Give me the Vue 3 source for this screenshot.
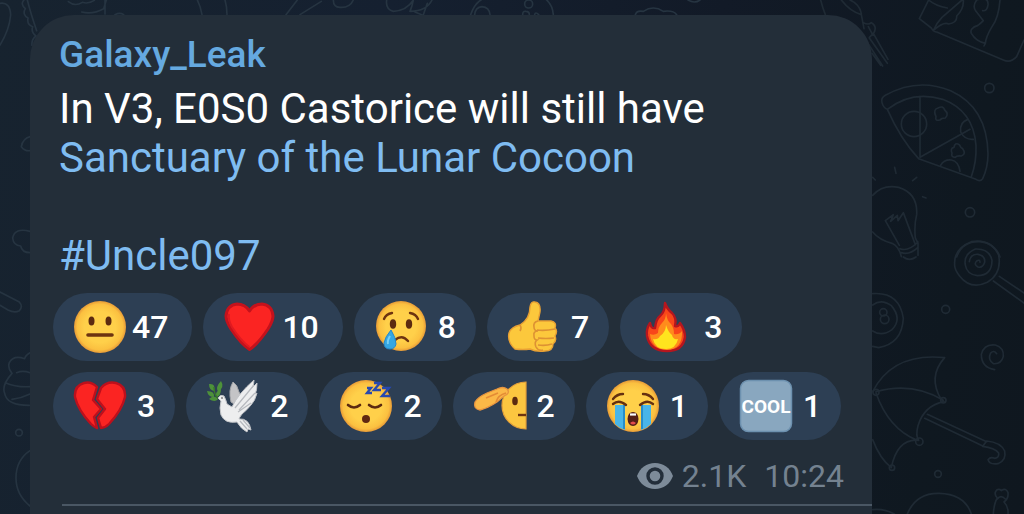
<script setup>
const reactions = [
  { name: 'neutral', label: 'Neutral face', count: 47 },
  { name: 'heart', label: 'Red heart', count: 10 },
  { name: 'cry', label: 'Crying face', count: 8 },
  { name: 'thumb', label: 'Thumbs up', count: 7 },
  { name: 'fire', label: 'Fire', count: 3 },
  { name: 'broken', label: 'Broken heart', count: 3 },
  { name: 'dove', label: 'Dove', count: 2 },
  { name: 'sleep', label: 'Sleeping face', count: 2 },
  { name: 'salute', label: 'Salute', count: 2 },
  { name: 'sob', label: 'Loudly crying face', count: 1 },
  { name: 'cool', label: 'Cool', count: 1 },
]
</script>

<template>
  <main class="chat">
    <svg class="wallpaper" viewBox="0 0 1024 514" preserveAspectRatio="xMaxYMin slice" aria-hidden="true">
      <g class="doodle left" transform="scale(.33333)">
        <path d="M0 10Q30 5 32 45Q28 90 0 135M72 0q-12 12 4 26q-10 18 8 28q-4 20 14 26q-6 16 10 28q-14 10-12 28M82 0q10 40 28 92M205 5q20 16 42 2q18 6 36-6M245 36q34 8 66-10l8-26M315 0v42M345 44q14-8 26 0M592 0q10 20 14 44M675 0q6 20 6 44M858 44l34-44M900 44l64-40M1000 0q0 22 20 22q30 2 40-22M1160 0q-4 28 20 34q40-2 60-34q-4 20-10 34q50 0 66-34M1270 44l12-34M1245 36l20 8" />
        <path d="M1424 44q2-22 22-24q22 2 24 24M1412 44q14-40 42-50M1628-10q30 20 32 54M1568 44q0-12 10-10q10 0 10 10M1604 44q2-10 12 0" /><circle cx="1586" cy="12" r="12" />
        <path d="M1906 44q4-14 24-10q30-20 60 0q30-4 40 10M2064 0q20 12 36 0" />
        <path d="M90 410q-22 6-26 30q10 14 26 12M90 694q-46-12-52 20q2 22 24 24q4 20 28 20M0 876l58 30q12 14 0 26q-14 8-34-2L0 916M90 1058q-14 8-16 18q-34-12-46 12q-6 16 8 32q-32 36-22 60q6 36 74 36M16 1148q30 14 74 12M36 1198q30-4 54-16M50 1118q18-8 40 0M90 1352q-42 28-42 82q0 50 42 84" /><circle cx="57" cy="1298" r="10" />
      </g>
      <g class="doodle" transform="translate(800 0) scale(.33333)">
        <path d="M62 0q6 24 14 44M124 0q26 34 60 44M150 0q28 12 34 40M184 44l8 42M190 68q16 8 24 0q18 10 8 30l-14 14M205 80l14 26M220 100l44 78M208 114l54 76M204 130l44 68M216 160l26 36" />
        <path d="M386 0l-28 56l36 28q6 12 16 12l200 84q22 10 40-10l22-50M400 92q10-24 26-40l60-52M386 0q20 18 56 24M404 88q28-24 42-16q26-4 24-24q22-22 20-48M530 0q-14 20-2 34l22 28q-8 8-16 14q-26 8-20 24q14 24 42 30l-4 8M600 0q-4 54-24 80q-18 30-20 50M530 0q36-12 34 14q-2 20-16 18" />
        <path d="M246 308q-4-14 10-22q96-54 196-14q110 50 112 190q0 40-16 74q-8 10-20 2l-172-62q-54-58-94-148q-12-4-16-20ZM262 328q74-58 166-30q92 34 100 138q2 50-14 94M360 290v182l150-84" />
        <circle cx="342" cy="372" r="38" /><path d="M504 358q-26 8-22 38q12 24 38 22M422 496q10-18 32-16q22 4 26 34M408 350q-10-22 6-26q16-8 20 6q14 12 2 24q-12 0-16 6q-16 4-12-10ZM456 460q-6-16 6-18q2-16 16-8q4 10 10 12q12 16-4 22q-14-2-18 4q-14 0-10-12Z" />
        <circle cx="568" cy="264" r="14" /><circle cx="510" cy="637" r="14" />
        <path d="M284 502l4 18M350 532l-12 10M218 532l8 8M368 590l10 4M218 586q30-34 78-24q58 18 54 82q-8 32-4 70l8 16v36M218 696q20 24 58 34q20 8 28 40M298 736l-42-74l24-18l-8 20l20-18l2 16l16-24l36 96M300 746q24 10 54-20M304 758q24 8 50-16" />
        <path d="M470 771q16-48 70-46q44 4 60 46" />
        <g transform="translate(0 771)">
          <path d="M464 20q-2-46 50-66q58-10 82 40q10 56-34 82q-50 24-84-20q-16-20-14-36ZM496 24q-6-32 30-48q42-2 50 34q0 46-44 46q-32-4-36-32ZM508 14q4-24 26-22q22 4 20 24q-6 18-20 14q-14-8-4-18q10-6 10 4M598 58l74 50M580 72l92 66M310 0q18 14 38 0" />
          <path d="M218 110q80-6 92 74q-4 76-74 88l-18-4M218 144q26-20 56 2q34 40 2 72q-30 22-58 4" /><circle cx="250" cy="166" r="11" /><circle cx="254" cy="187" r="13" />
          <circle cx="437" cy="157" r="12" /><path d="M584 338q-40-6-40-46q8-32 42-28q26 8 24 34q-6 24-30 22q-18-12-8-32q10-10 18 2" />
          <path d="M218 404q60-118 216-102q-52 58-10 126l8 6q-60 12-78 72q-8 30 2 44q-64-6-82 82q-34-26-56-84M228 404q110-30 202 26M228 408q38 108 124 142" /><circle cx="228" cy="406" r="9" /><circle cx="430" cy="430" r="8" /><circle cx="358" cy="554" r="11" /><circle cx="276" cy="632" r="8" />
          <path d="M382 472l178 82M374 484l176 84M548 568l12-16q42 4 54 30q6 28-20 38q-26 4-30-12q8-10 20-4q14-2 12-16q-12-16-48-20" />
          <circle cx="414" cy="651" r="10" /><path d="M218 758q34-4 66 14M322 771q26-64 96-62q76 2 96 62M580 771q2-32 12-48q-12-12-2-24q8-4 14 2q14-10 20 6q2 18-12 28q14 14 12 36M592 726q10-14 24 0" />
        </g>
      </g>
    </svg>

    <article class="message">
      <a class="author" href="#channel">Galaxy_Leak</a>
      <p class="body">
        In V3, E0S0 Castorice will still have<br />
        <a href="#sanctuary">Sanctuary of the Lunar Cocoon</a><br /><br />
        <a href="#uncle097">#Uncle097</a>
      </p>

      <div class="reactions">
        <button v-for="r in reactions" :key="r.name" type="button" class="pill" :class="{ wide: r.count > 9 }" :aria-label="`${r.label} ${r.count}`">
          <svg class="emoji" viewBox="0 0 54 54" aria-hidden="true">
            <defs>
              <radialGradient :id="`skin-${r.name}`">
                <stop offset="0.6" stop-color="#ffd04a" /><stop offset="0.88" stop-color="#fbc040" /><stop offset="1" stop-color="#e69a38" />
              </radialGradient>
            </defs>

            <g v-if="r.name === 'neutral'">
              <circle cx="27" cy="27" r="26" fill="url(#skin-neutral)" />
              <ellipse cx="18.500" cy="21" rx="3" ry="4.600" fill="#5c2a10" /><ellipse cx="35.500" cy="21" rx="3" ry="4.600" fill="#5c2a10" />
              <path d="M15 35h24" stroke="#6d3310" stroke-width="3.600" stroke-linecap="round" />
            </g>

            <g v-else-if="r.name === 'heart'">
              <path d="M26.500 49.500Q18 44 8 29Q3 21 3 16Q4 5 14 4Q22 4 26.500 11Q31 4 39 4Q49 5 50 16Q50 21 45 29Q35 44 26.500 49.500Z" fill="#fb2422" stroke="#c4121c" stroke-width="3" stroke-linejoin="round" />
              <path d="M26.500 47Q18 41 9 27Q5 20 6 14" fill="none" stroke="#e01a20" stroke-width="2" />
            </g>

            <g v-else-if="r.name === 'cry'">
              <circle cx="27" cy="26" r="25" fill="url(#skin-cry)" />
              <ellipse cx="19" cy="24" rx="3.200" ry="4.700" fill="#5c2a10" /><ellipse cx="35" cy="24" rx="3.200" ry="4.700" fill="#5c2a10" />
              <path d="M10 19q2-5 8-6M36 13q6 1 8 6M21 40q7-6 13 1" fill="none" stroke="#6d3310" stroke-width="2.400" stroke-linecap="round" />
              <path d="M17 30Q22 38 22 44Q21 49 16 49Q10 49 10 43Q11 37 17 30Z" fill="#35a7e3" stroke="#2788cb" /><path d="M16 36q-3 5-2 8" stroke="#77d0f5" stroke-width="2" fill="none" />
            </g>

            <g v-else-if="r.name === 'thumb'">
              <path d="M13 25Q23 19 23 7Q24 1 28 2Q34 3 33 12L31 21H44Q50 22 48 28Q51 31 48 36Q50 41 46 44Q46 51 38 51Q29 52 23 49Q16 50 8 49Q0 42 2 33Q4 27 13 25Z" fill="#fcc83c" stroke="#e8a034" stroke-width="1.400" />
              <path d="M31 21q-5 1-4 6q0 4 4 4q-5 0-4 5q0 4 3 4q-3 2-1 7q2 4 7 3M30 30q8 1 18-1M31 38q8 1 16 0M31 45q8 1 14-1M13 25q2 3 0 6" fill="none" stroke="#dd9233" stroke-width="1.600" />
            </g>

            <g v-else-if="r.name === 'fire'">
              <path d="M25 3Q27 9 32 13Q37 18 35 26Q39 27 40 23Q45 30 45 37Q43 51 27 51Q10 51 7 36Q6 29 10 23Q11 29 15 28Q16 19 20 16Q25 12 25 3Z" fill="#f8461a" stroke="#b5161e" stroke-width="2.400" stroke-linejoin="round" />
              <path d="M26 13Q27 21 31 24Q34 28 34 34Q39 35 42 31Q43 49 27 50Q11 49 10 34Q14 36 18 33Q18 27 22 23Q26 19 26 13Z" fill="#ff8c1c" />
              <path d="M26 25Q28 32 32 35Q33 40 38 39Q36 49 26 49Q15 49 13 39Q18 40 20 36Q26 32 26 25Z" fill="#ffe41e" />
            </g>

            <g v-else-if="r.name === 'broken'" fill="#fb2422" stroke="#bd101c" stroke-width="2.400" stroke-linejoin="round">
              <path d="M24 8Q18 2 11 4Q1 7 2 18Q5 31 18 45Q21 48 24 49L21 38L28 30L20 21Z" />
              <path d="M28 9Q34 2 43 4Q53 7 52 18Q49 31 36 45Q32 49 28 49L25 39L32 30L24 20Z" />
            </g>

            <g v-else-if="r.name === 'dove'">
              <path d="M3 5Q10 4 8 12Q3 11 3 5ZM15 2Q19 8 12 13Q9 8 15 2ZM1 12Q9 12 8 18Q2 18 1 12ZM15 10Q15 17 10 18Q9 12 15 10ZM3 20Q8 15 12 20Q9 24 3 20Z" fill="#4d913a" /><path d="M15 20Q8 19 8 8" fill="none" stroke="#39752d" stroke-width="1.500" />
              <path d="M25 23Q22 11 27 3Q31 5 33 13L37 20L31 27Z" fill="#c4c4c6" stroke="#a4a5a9" />
              <path d="M12 19Q14 15 18 17Q20 21 21 25L26 28Q32 15 48 1Q48 6 46 9L51 4Q51 12 49 15L51 14Q49 22 45 26Q41 31 36 35Q33 39 33 40Q43 39 45 51L42 50L41 53Q35 50 31 43Q19 45 15 36Q13 29 15 22Z" fill="#edeeef" stroke="#c2c4c8" />
              <path d="M48 6L29 29M49 14L33 31M45 24L32 33M34 42l7 8M37 41l7 8" fill="none" stroke="#b7babf" stroke-width="1.200" /><circle cx="16" cy="19" r=".8" fill="#333" />
            </g>

            <g v-else-if="r.name === 'sleep'">
              <circle cx="27" cy="27" r="26" fill="url(#skin-sleep)" />
              <path d="M9 26q6 5 12 0M30 26q6 5 12 0" fill="none" stroke="#5c2a10" stroke-width="2.600" stroke-linecap="round" /><circle cx="27" cy="40" r="4" fill="#602811" />
              <path d="M28 9h4l-4 5h5M35 4h6l-6 7h7M43 9h7l-7 8h8" fill="none" stroke="#2949ae" stroke-width="2.400" />
            </g>

            <g v-else-if="r.name === 'salute'">
              <path d="M53 3A24 23.500 0 0 0 53 50Z" fill="#fcc640" stroke="#e5a03a" stroke-width="1.200" />
              <path d="M2 23Q5 18 14 14L24 10Q30 7 34 10Q38 14 31 17L24 23Q15 29 7 31Q0 30 2 23Z" fill="#fbb847" stroke="#e79440" stroke-width="1.300" />
              <path d="M13 19l12-5M23 23q2-7 10-9" fill="none" stroke="#e48b35" stroke-width="1.600" />
              <ellipse cx="42" cy="22" rx="2.800" ry="4.300" fill="#5c2a10" /><path d="M45 36h8" stroke="#6d3310" stroke-width="2.400" />
            </g>

            <g v-else-if="r.name === 'sob'">
              <circle cx="27" cy="27" r="26" fill="url(#skin-sob)" />
              <path d="M9 26h10v25Q13 49 9 45ZM35 26h10v19Q41 49 35 51Z" fill="#49b5e8" /><path d="M18 26v24M36 26v24" stroke="#278dca" stroke-width="2" />
              <path d="M7 25q6-5 13 1M34 26q7-6 13-1M7 20q4-5 10-5M37 15q6 0 10 5" fill="none" stroke="#653010" stroke-width="2.400" stroke-linecap="round" />
              <path d="M21.500 40Q22 33 27 33Q32 33 32.500 40Q32 47 27 47Q22 47 21.500 40Z" fill="#541f17" /><path d="M24 35.500h6" stroke="#fff" stroke-width="2.200" /><path d="M24 44q3-3 6 0q-3 3-6 0Z" fill="#e34c4c" />
            </g>

            <g v-else>
              <rect x="1.500" y="1.500" width="51" height="51" rx="8" fill="#89a7bf" stroke="#6d91af" stroke-width="1.500" />
              <text class="cool" x="27" y="34" text-anchor="middle">COOL</text>
            </g>
          </svg>
          <span>{{ r.count }}</span>
        </button>
      </div>

      <footer class="meta">
        <svg class="eye" viewBox="0 0 36 26" role="img" aria-label="Views">
          <path d="M18 0C9.500 0 3 5 0 13C3 21 9.500 26 18 26S33 21 36 13C33 5 26.500 0 18 0Z" fill="#7d8b99" />
          <circle cx="18" cy="13" r="7" fill="#7d8b99" stroke="#232e3a" stroke-width="3.400" />
        </svg>
        <span>2.1K</span>
        <time>10:24</time>
      </footer>
      <div class="divider"></div>
    </article>
  </main>
</template>

<style>
body { margin: 0; background: #0f171f; }
</style>

<style scoped>
.chat {
  position: relative;
  box-sizing: border-box;
  min-height: 100vh;
  display: flex;
  padding: 15px 152px 0 30px;
  overflow: hidden;
  font-family: Roboto, "Liberation Sans", sans-serif;
  background: linear-gradient(100deg, #17232f 0%, #152030 35%, #121a27 65%, #0f1820 90%, #0f171f 100%);
}
.wallpaper {
  position: absolute;
  inset: 0;
  width: 100%;
  height: 100%;
}
.doodle {
  fill: none;
  stroke: #1f2a34;
  stroke-width: 5;
  stroke-linecap: round;
  stroke-linejoin: round;
}
.left { stroke: #263441; }
.message {
  position: relative;
  flex: 1;
  min-width: 0;
  box-sizing: border-box;
  padding: 19px 23px 0;
  border-radius: 44px 44px 0 0;
  background: #232e39;
}
.author {
  display: block;
  width: fit-content;
  margin: 0 6px;
  color: #65a9e0;
  font-size: 37px;
  font-weight: 500;
  line-height: 42px;
  text-decoration: none;
}
.body {
  margin: 8px 6px 13px;
  color: #fff;
  font-size: 42px;
  line-height: 49px;
}
.body a {
  color: #7fbcf1;
  text-decoration: none;
}
.reactions {
  display: flex;
  flex-wrap: wrap;
  gap: 11px;
}
.pill {
  display: flex;
  align-items: center;
  gap: 10px;
  height: 68px;
  padding: 0 20px;
  border: 0;
  border-radius: 34px;
  background: #2d3f54;
  color: #fff;
  font-family: inherit;
  font-size: 32px;
  font-weight: 500;
  line-height: 38px;
}
.wide {
  gap: 5px;
  padding-right: 24px;
}
.emoji {
  width: 54px;
  height: 54px;
}
.cool {
  fill: #fff;
  font-size: 19px;
  font-weight: 700;
}
.meta {
  display: flex;
  align-items: center;
  justify-content: flex-end;
  margin: 17px 5px 9px;
  color: #748290;
  font-size: 32px;
  line-height: 38px;
}
.eye {
  width: 36px;
  height: 26px;
  margin-right: 9px;
}
.meta time { margin-left: 18px; }
.divider {
  height: 2px;
  margin: 0 -23px 8px 9px;
  background: #4a5764;
}
</style>
